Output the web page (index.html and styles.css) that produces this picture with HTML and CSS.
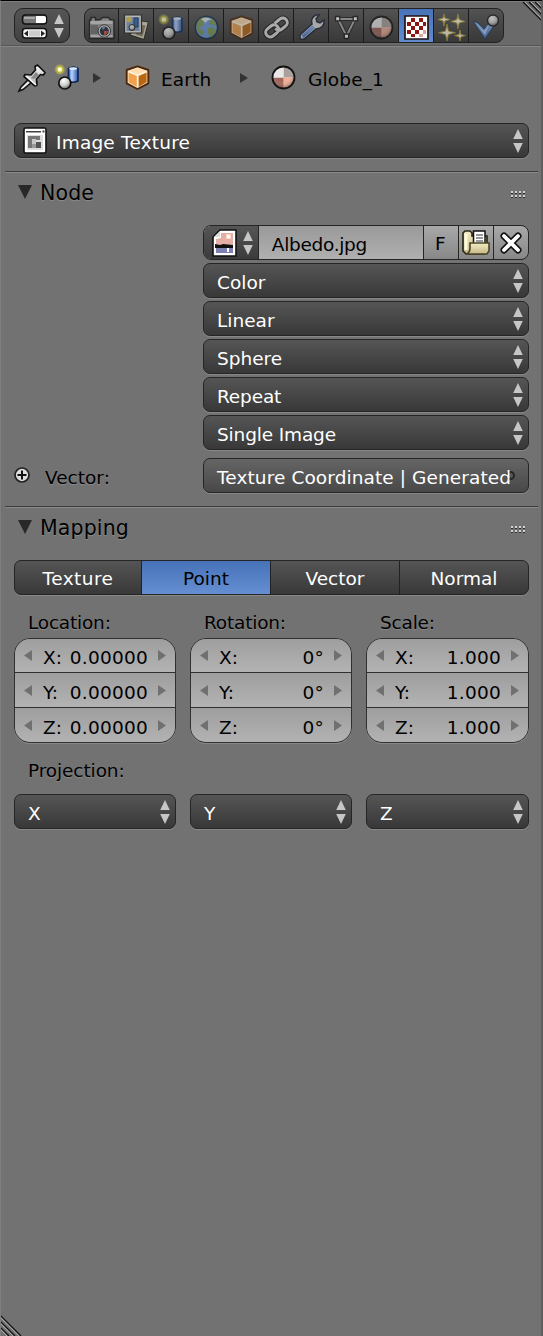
FILE: index.html
```html
<!DOCTYPE html>
<html lang="en">
<head>
<meta charset="utf-8">
<title>Texture properties</title>
<link rel="stylesheet" href="styles.css">
</head>
<body>
<svg class="defs" width="0" height="0" aria-hidden="true">
  <defs>
    <radialGradient id="ball" cx=".4" cy=".3" r=".75"><stop offset="0" stop-color="#fff"/><stop offset=".55" stop-color="#ccc"/><stop offset="1" stop-color="#555"/></radialGradient>
    <radialGradient id="glow"><stop offset="0" stop-color="#ffffb0"/><stop offset=".3" stop-color="#e2dc4a"/><stop offset=".65" stop-color="#c9c440" stop-opacity=".65"/><stop offset="1" stop-color="#c9c440" stop-opacity="0"/></radialGradient>
    <linearGradient id="tube"><stop offset="0" stop-color="#3c6cc0"/><stop offset=".35" stop-color="#b8d4ff"/><stop offset="1" stop-color="#2757a8"/></linearGradient>
    <linearGradient id="metal" x2="0" y2="1"><stop offset="0" stop-color="#fff"/><stop offset="1" stop-color="#aaa"/></linearGradient>
    <linearGradient id="blue" x2="0" y2="1"><stop offset="0" stop-color="#8fb8f0"/><stop offset="1" stop-color="#4478c4"/></linearGradient>
    <linearGradient id="sand" x2="0" y2="1"><stop offset="0" stop-color="#f4ecc4"/><stop offset="1" stop-color="#c5b884"/></linearGradient>
    <radialGradient id="sphereShade" cx=".42" cy=".35" r=".65"><stop offset=".5" stop-color="#fff" stop-opacity="0"/><stop offset="1" stop-color="#000" stop-opacity=".35"/></radialGradient>
  </defs>
  <symbol id="scene" viewBox="0 0 27 27">
    <path d="M14.500 4.500v12.500q4.500 2.500 9.500 0v-12.500q-4.500-3-9.500 0z" fill="url(#tube)" stroke="#122a55" stroke-width="1.700"/>
    <ellipse cx="19.200" cy="4.600" rx="4" ry="1.400" fill="#dbe9ff"/>
    <circle cx="5.800" cy="5.500" r="5.800" fill="url(#glow)"/><rect x="4" y="3.700" width="3.600" height="3.600" fill="#ffffd5"/>
    <circle cx="10.800" cy="19" r="6" fill="url(#ball)" stroke="#111" stroke-width="1.700"/>
  </symbol>
  <symbol id="cube" viewBox="0 0 27 27">
    <path d="M13.500 2.300 24.300 6v13.300L13.500 25 2.700 19.300V6z" fill="#fff0d8" stroke="#4a2508" stroke-width="1.900" stroke-linejoin="round"/>
    <path d="M4.500 8.500 12.800 12v11L4.500 18.200z" fill="#f1a04c"/><path d="M14.600 12l8-3.500v9.800l-8 4.700z" fill="#b96610"/><path d="M13.500 3.800 22 6.900l-8.500 3.400L5 6.900z" fill="#ffdcae"/>
  </symbol>
  <symbol id="material" viewBox="0 0 27 27">
    <circle cx="13.500" cy="13.500" r="11" fill="#f1efee"/>
    <path d="M13.500 13.500V2.500a11 11 0 0 1 11 11z" fill="#aaa09c"/><path d="M13.500 13.500h11a11 11 0 0 1-11 11z" fill="#f0ae96"/><path d="M13.500 13.500v11a11 11 0 0 1-11-11z" fill="#a2655a"/><path d="M13.500 13.500H2.500a11 11 0 0 1 11-11z" fill="#e9e8e8"/>
    <circle cx="13.500" cy="13.500" r="11" fill="url(#sphereShade)" stroke="#111" stroke-width="1.800"/>
  </symbol>
  <symbol id="updown" viewBox="0 0 10 24"><path d="M5 0 9.800 10H.200zM.200 14h9.600L5 24z" fill="#c6c6c6"/></symbol>
  <symbol id="grip" viewBox="0 0 15 7"><path d="M0 1h2m2 0h2m2 0h2m2 0h2M0 5h2m2 0h2m2 0h2m2 0h2" stroke="#d2d2d2" stroke-width="2"/><path d="M0 2.500h2m2 0h2m2 0h2m2 0h2M0 6.500h2m2 0h2m2 0h2m2 0h2" stroke="#303030"/></symbol>
</svg>

<main class="editor">
  <header class="header">
    <button class="editor-type">
      <svg class="toggles" viewBox="0 0 27 27"><rect x="1.500" y="2" width="24" height="9" rx="3" fill="#777" stroke="#111" stroke-width="1.500"/><path d="M15 3h8q2 0 2 2v3q0 2-2 2h-8z" fill="#fff"/><path d="M3 4h11v2H3z" fill="#aaa"/><rect x="1.500" y="15.500" width="24" height="9.500" rx="3" fill="#f4f4f4" stroke="#111" stroke-width="1.500"/><path d="M8 17.500h11v6H8z" fill="#ccc"/><path d="M7 17.500v6l-4-3zM20 17.500v6l4-3z" fill="#222"/></svg>
      <svg class="updown"><use href="#updown"/></svg>
    </button>
    <nav class="tabs">
      <button class="tab"><svg viewBox="0 0 27 27"><path d="M3 3.500h4.500V6l5-.500 2-2h6l1.500 2 4 .500v18.500H1.500V6H3z" fill="#a5a5a5" stroke="#191919" stroke-width="1.400"/><path d="M2.500 7h22v3h-22zM2.500 21h22v2h-22z" fill="#d8d8d8"/><path d="M3 11h7v9H3z" fill="#777"/><circle cx="16.300" cy="17" r="6.300" fill="#ddd" stroke="#333"/><circle cx="16.300" cy="17" r="4.500" fill="#222b40"/><path d="M16 17h4q-1 4-4 4z" fill="#d4553f"/><path d="M13.500 14q2-2 4-1l-2 3z" fill="#7b8fb8"/></svg></button>
      <button class="tab"><svg viewBox="0 0 27 27"><path d="m12 6 13.500 2-4.500 17.500L7 21z" fill="#ddd8c4" stroke="#2a2a20" stroke-width="1.200"/><path d="m19 11 3.500.500-3 11-7-2z" fill="#8a8262"/><path d="M1.500 1h17v18h-17z" fill="#f0f0f0" stroke="#222" stroke-width="1.200"/><path d="M3.500 3h13v14h-13z" fill="#85a4cb"/><circle cx="6" cy="5.500" r="2.800" fill="#e3c958"/><path d="M11 4h4v9h-4z" fill="#316abd" stroke="#183968"/><circle cx="9" cy="13.500" r="3" fill="url(#ball)" stroke="#222"/></svg></button>
      <button class="tab"><svg><use href="#scene"/></svg></button>
      <button class="tab"><svg viewBox="0 0 27 27"><circle cx="13.500" cy="13.500" r="11.200" fill="#6b9bdd" stroke="#162b4c" stroke-width="1.500"/><path d="M3.500 10Q6 3.500 12 3l1 3-3 1 1 3-3 3-2 1 3 2 2 2-2 4Q3 18 3.500 10zM15 4q7 1 8.500 7l-2 1-2-2-3 1-1-3 2-1zM15 14l4-1 4 3q-1 5-6 7.500L15 19z" fill="#7c9a52"/><path d="M8 5q6-3 11 1-5-1-6 3z" fill="#fff" opacity=".75"/></svg></button>
      <button class="tab"><svg><use href="#cube"/></svg></button>
      <button class="tab"><svg viewBox="0 0 27 27"><g fill="none" transform="rotate(-38 13.500 13.500)"><g stroke="#1b1b1b" stroke-width="5.300"><rect x="1" y="9" width="14" height="9" rx="4.500"/><rect x="12" y="9" width="14" height="9" rx="4.500"/></g><g stroke="#e0e0e0" stroke-width="3"><rect x="1" y="9" width="14" height="9" rx="4.500"/><path d="M14.500 9H21.500a4.500 4.500 0 0 1 0 9H16.500a4.500 4.500 0 0 1-4.500-4.500"/></g></g></svg></button>
      <button class="tab"><svg viewBox="0 0 27 27"><path d="M2 21 14 10q-2-6 4-9h3l-3 4 1 3 3 1 4-3q1 8-8 9L6 25q-3 1-4-1z" fill="#ddd" stroke="#182136" stroke-width="1.500"/><path d="m3.500 21.500 11-10.500 2.500 3L5.500 24z" fill="url(#blue)"/></svg></button>
      <button class="tab"><svg viewBox="0 0 27 27"><path d="M5 5h17l-8.500 17z" fill="none" stroke="#191919" stroke-width="3.800"/><path d="M5 5h17l-8.500 17z" fill="none" stroke="#aaa" stroke-width="2"/><g fill="#fff" stroke="#161616" stroke-width="1.300"><path d="M2.500 2.500h4.300v4.300H2.500zM20.200 2.500h4.300v4.300h-4.300zM11.300 20h4.300v4.300h-4.300z"/></g></svg></button>
      <button class="tab"><svg><use href="#material"/></svg></button>
      <button class="tab active"><svg viewBox="0 0 27 27"><path d="M2 2h23v23H2z" fill="#fff" stroke="#211" stroke-width="1.700"/><g fill="#8d1612"><path d="M8 4h4v4H8zM16 4h4v4h-4zM4 8h4v4H4zM12 8h4v4h-4zM20 8h3v4h-3zM8 12h4v4H8zM16 12h4v4h-4zM4 16h4v4H4zM12 16h4v4h-4zM8 20h4v3H8z"/></g><path d="M20 16h3v4h-3zM16 20h4v3h-4z" fill="#dda49b"/></svg></button>
      <button class="tab"><svg viewBox="0 0 27 27"><g fill="#fff8d8" stroke="#a59331" stroke-width="1"><path d="m6 0 1 4 5 1.500-5 1.500-1 5-1-5-5-1.500L5 4z"/><path d="m20 0 1.200 5.500 6 2-6 1.500L20 15l-1.200-6-6-1.500 6-2zM9 10l1.500 7 7 1.700-7 1.800L9 27l-1.500-6.500-7-1.800 7-1.700zM22 16l1 4.500 4.500 1-4.500 1.500-1 4-1-4-4.500-1.500 4.500-1z"/></g></svg></button>
      <button class="tab"><svg viewBox="0 0 27 27"><path d="m0 7 5 2 6 6 6-8 5 3-10 15z" fill="url(#blue)" stroke="#203964"/><path d="m3 9 8 8 5-6-4 10z" fill="#b9d2f8"/><circle cx="20" cy="6.500" r="5.500" fill="url(#ball)" stroke="#181818" stroke-width="1.400"/></svg></button>
    </nav>
  </header>

  <nav class="path">
    <svg class="pin" viewBox="0 0 28 28"><path d="m11 15 3 3-9 7.500-4 1.500 2-4z" fill="#eee" stroke="#111" stroke-width="1.600"/><path d="M17 2.500 19.500 1 27 8.500 25.500 11l-3-.500-4 4.500.500 6-2 1L6 12.500l1-2 6 .500 4.500-5z" fill="url(#metal)" stroke="#111" stroke-width="1.700" stroke-linejoin="round"/><path d="m18 8 3 3-5 4-3-1z" fill="#888"/><path d="m8 12 10 9" stroke="#fff" stroke-width="1.500"/></svg>
    <svg class="path-scene"><use href="#scene"/></svg>
    <svg class="arrow" viewBox="0 0 8 10"><path d="m0 0 8 5-8 5z"/></svg>
    <svg class="path-cube"><use href="#cube"/></svg>
    <span class="path-object">Earth</span>
    <svg class="arrow" viewBox="0 0 8 10"><path d="m0 0 8 5-8 5z"/></svg>
    <svg class="path-material"><use href="#material"/></svg>
    <span>Globe_1</span>
  </nav>

  <button class="select type">
    <svg class="texture-icon" viewBox="0 0 24 27"><rect x="1" y="1" width="22" height="25" rx="1.500" fill="#fff" stroke="#111" stroke-width="1.600"/><path d="M3 4h15v1.500H3zM19.500 3.500h2v2h-2z" fill="#444"/><path d="M4 8h16v15H4z" fill="#ddd"/><path d="M5 9h12v4H5zM5 13h4v8H5z" fill="#777"/><path d="M9 12h4v5H9z" fill="#c8c8c8"/><path d="M13 15h5v6h-5z" fill="#555"/><path d="M9 17h4v4H9z" fill="#999"/></svg>
    <span>Image Texture</span><svg class="updown"><use href="#updown"/></svg>
  </button>

  <section class="panel node">
    <h2><svg class="tri" viewBox="0 0 14 14"><path d="M0 0h14L7 14z"/></svg><span>Node</span><svg class="grip"><use href="#grip"/></svg></h2>
    <div class="stack">
      <div class="datablock">
        <button class="browse"><svg class="image-icon" viewBox="0 0 25 28"><path d="M8 1h16v26H1V8z" fill="#fff" stroke="#111" stroke-width="1.600"/><path d="M9 4h12v12H4V10l5-1z" fill="#e5afa6"/><path d="M4 18h17v6H4z" fill="#7c80b2"/><path d="m3 15 5 1 3-1 10 1v3H3z" fill="#111"/><path d="M14 5h5v5h-5z" fill="#ffd3c4"/><path d="M15 6h3v3h-3zM15 19h2v4h-2z" fill="#fff"/><path d="m2 8 6-6v6z" fill="#ddd"/></svg><svg class="updown"><use href="#updown"/></svg></button>
        <span class="name">Albedo.jpg</span>
        <button class="small fake-user">F</button>
        <button class="small"><svg class="folder" viewBox="0 0 28 25"><path d="M1 3 3 1h5l2 2v3h15v16l-3 2H4l-3-3z" fill="url(#sand)" stroke="#2b2714" stroke-width="1.700"/><path d="M11.500 1h11.500v14h-11.500z" fill="#fff" stroke="#111" stroke-width="1.500"/><path d="M14 5h7M14 8h7M14 11h7" stroke="#777" stroke-width="1.300"/><path d="M4 24q4-1 4-6v-5h19v8l-2 3z" fill="url(#sand)" stroke="#4c4529" stroke-width="1.600"/><path d="M4 4v16" stroke="#fffbe0" stroke-width="3"/></svg></button>
        <button class="small"><svg class="cross" viewBox="0 0 22 22"><path d="m4 4 14 14M18 4 4 18" stroke="#111" stroke-width="7" stroke-linecap="round"/><path d="m4 4 14 14M18 4 4 18" stroke="#fff" stroke-width="3.800" stroke-linecap="round"/></svg></button>
      </div>
      <button class="select"><span>Color</span><svg class="updown"><use href="#updown"/></svg></button>
      <button class="select"><span>Linear</span><svg class="updown"><use href="#updown"/></svg></button>
      <button class="select"><span>Sphere</span><svg class="updown"><use href="#updown"/></svg></button>
      <button class="select tight"><span>Repeat</span><svg class="updown"><use href="#updown"/></svg></button>
      <button class="select tight"><span>Single Image</span><svg class="updown"><use href="#updown"/></svg></button>
    </div>
    <div class="vector-row">
      <svg class="plus" viewBox="0 0 16 16"><circle cx="8" cy="8" r="7" fill="#ddd" stroke="#222" stroke-width="1.700"/><path d="M8 3.500v9M3.500 8h9" stroke="#111" stroke-width="2"/></svg>
      <span class="label">Vector:</span>
      <button class="select link"><span>Texture Coordinate | Generated</span><i class="socket"></i></button>
    </div>
  </section>

  <section class="panel mapping">
    <h2><svg class="tri" viewBox="0 0 14 14"><path d="M0 0h14L7 14z"/></svg><span>Mapping</span><svg class="grip"><use href="#grip"/></svg></h2>
    <div class="segments"><button class="wide">Texture</button><button class="active">Point</button><button>Vector</button><button>Normal</button></div>
    <div class="columns labels"><span>Location:</span><span>Rotation:</span><span>Scale:</span></div>
    <div class="columns values">
      <div class="numbers">
        <div class="number"><svg viewBox="0 0 8 11"><path d="M8 0v11L0 5.500z"/></svg><span>X:</span><b>0.00000</b><svg viewBox="0 0 8 11"><path d="m0 0 8 5.500L0 11z"/></svg></div>
        <div class="number"><svg viewBox="0 0 8 11"><path d="M8 0v11L0 5.500z"/></svg><span>Y:</span><b>0.00000</b><svg viewBox="0 0 8 11"><path d="m0 0 8 5.500L0 11z"/></svg></div>
        <div class="number"><svg viewBox="0 0 8 11"><path d="M8 0v11L0 5.500z"/></svg><span>Z:</span><b>0.00000</b><svg viewBox="0 0 8 11"><path d="m0 0 8 5.500L0 11z"/></svg></div>
      </div>
      <div class="numbers">
        <div class="number"><svg viewBox="0 0 8 11"><path d="M8 0v11L0 5.500z"/></svg><span>X:</span><b>0°</b><svg viewBox="0 0 8 11"><path d="m0 0 8 5.500L0 11z"/></svg></div>
        <div class="number"><svg viewBox="0 0 8 11"><path d="M8 0v11L0 5.500z"/></svg><span>Y:</span><b>0°</b><svg viewBox="0 0 8 11"><path d="m0 0 8 5.500L0 11z"/></svg></div>
        <div class="number"><svg viewBox="0 0 8 11"><path d="M8 0v11L0 5.500z"/></svg><span>Z:</span><b>0°</b><svg viewBox="0 0 8 11"><path d="m0 0 8 5.500L0 11z"/></svg></div>
      </div>
      <div class="numbers">
        <div class="number"><svg viewBox="0 0 8 11"><path d="M8 0v11L0 5.500z"/></svg><span>X:</span><b>1.000</b><svg viewBox="0 0 8 11"><path d="m0 0 8 5.500L0 11z"/></svg></div>
        <div class="number"><svg viewBox="0 0 8 11"><path d="M8 0v11L0 5.500z"/></svg><span>Y:</span><b>1.000</b><svg viewBox="0 0 8 11"><path d="m0 0 8 5.500L0 11z"/></svg></div>
        <div class="number"><svg viewBox="0 0 8 11"><path d="M8 0v11L0 5.500z"/></svg><span>Z:</span><b>1.000</b><svg viewBox="0 0 8 11"><path d="m0 0 8 5.500L0 11z"/></svg></div>
      </div>
    </div>
    <div class="projection-label">Projection:</div>
    <div class="columns">
      <button class="select"><span>X</span><svg class="updown"><use href="#updown"/></svg></button>
      <button class="select"><span>Y</span><svg class="updown"><use href="#updown"/></svg></button>
      <button class="select"><span>Z</span><svg class="updown"><use href="#updown"/></svg></button>
    </div>
  </section>
  <svg class="corner top" viewBox="0 0 21 21"><path d="m1 1 20 20M7 1l14 14M13 1l8 8" stroke="#111" stroke-width="1.200"/><path d="m3 1 18 18M9 1l12 12M15 1l6 6" stroke="#aaa" stroke-width="1"/></svg>
  <svg class="corner bottom" viewBox="0 0 21 21"><path d="m0 0 21 21M0 6l15 15M0 12l9 9" stroke="#111" stroke-width="1.200"/><path d="m0 2 19 19M0 8l13 13M0 14l7 7" stroke="#aaa" stroke-width="1"/></svg>
</main>
</body>
</html>
```
FILE: styles.css
```css
* { box-sizing: border-box; }
body { margin: 0; background: #727272; color: #000; font: 18.5px/35px "DejaVu Sans", sans-serif; }
button { margin: 0; padding: 0; border: 0; background: none; color: inherit; font: inherit; text-align: left; }
svg { display: block; flex: none; overflow: visible; }
.defs { position: absolute; }
.editor { position: relative; height: 1336px; overflow: hidden; border-top: 1px solid #000; border-left: 1px solid #7f7f7f; border-right: 2px solid #5e5e5e; }
.header { display: flex; height: 46px; padding: 6px 0 0 13px; gap: 14px; background: #6a6a6a; border-top: 1px solid #7c7c7c; border-bottom: 1px solid #888; box-shadow: inset 0 -1px #555; }
.editor-type { display: flex; width: 56px; height: 35px; padding: 4px 6px; border: 1px solid #222; border-radius: 9px; background: linear-gradient(#555, #414141); }
.editor-type .toggles { width: 27px; height: 27px; }
.updown { width: 10px; height: 24px; }
.editor-type .updown { margin: 1px 0 0 6px; }
.tabs { display: flex; width: 420px; height: 35px; border: 1px solid #222; border-radius: 8px; overflow: hidden; background: linear-gradient(#535353, #393939); }
.tab { width: 35px; height: 33px; padding: 3px 0 0 4px; border-right: 1px solid #1c1c1c; flex: none; }
.tab:first-child { width: 34px; padding-left: 3px; }
.tab:last-child { border: 0; }
.tab svg { width: 27px; height: 27px; opacity: .65; }
.tab.active { background: linear-gradient(#4772b8, #628ccf); }
.tab.active svg { opacity: 1; }
.path { display: flex; align-items: center; height: 76px; padding: 0 0 15px 17px; }
.path span { padding-top: 3px; letter-spacing: .15px; }
.pin { width: 28px; height: 28px; }
.path-scene { width: 27px; height: 27px; margin-left: 8px; }
.arrow { width: 8px; height: 10px; fill: #333; margin-left: 12px; }
.path-cube { width: 27px; height: 27px; margin: 0 10px 0 23px; }
.path-object { width: 67px; }
.path-object + .arrow { margin-left: 12px; }
.path-material { width: 27px; height: 27px; margin: 0 11px 0 22px; }
.select { display: flex; align-items: center; width: 100%; height: 35px; padding: 0 5px 0 13px; border: 1px solid #252525; border-radius: 7px; background: linear-gradient(#555, #383838); box-shadow: 0 1px #888; color: #fff; white-space: nowrap; }
.select > span { padding-top: 3px; }
.select .updown { margin-left: auto; }
.tight { letter-spacing: -.15px; }
.type { width: 515px; margin-left: 13px; padding-left: 8px; letter-spacing: .2px; }
.texture-icon { width: 24px; height: 27px; margin: 0 9px 0 0; }
.panel { margin: 13px 3px 0 4px; padding: 0 9px; border-top: 1px solid #3b3b3b; box-shadow: inset 0 1px #8b8b8b; }
h2 { display: flex; align-items: center; height: 41px; margin: 0; padding: 0 4px; font-size: 20.5px; font-weight: 400; letter-spacing: .15px; text-shadow: 0 1px 1px #8e8e8e; }
h2 span { padding-top: 2px; margin-left: 8px; }
.tri { width: 14px; height: 14px; margin-top: -2px; fill: #282828; }
.grip { width: 15px; height: 7px; margin: 4px -1px 0 auto; }
.stack { display: grid; gap: 3px; margin: 12px 0 0 189px; }
.datablock { display: flex; height: 35px; border: 1px solid #252525; border-radius: 8px; overflow: hidden; background: linear-gradient(#a8a8a8, #888); }
.browse { display: flex; width: 55px; padding: 3px 0 0 8px; border-right: 1px solid #252525; background: linear-gradient(#555, #3b3b3b); }
.image-icon { width: 25px; height: 28px; }
.browse .updown { margin: 2px 0 0 6px; }
.name { width: 165px; height: 33px; padding: 1px 0 0 13px; background: linear-gradient(#999, #b0b0b0); letter-spacing: -.3px; }
.small { display: flex; align-items: center; justify-content: center; width: 35px; border-left: 1px solid #252525; }
.fake-user { padding: 2px 2px 0 0; }
.folder { width: 28px; height: 25px; }
.cross { width: 22px; height: 22px; }
.vector-row { display: flex; align-items: center; height: 35px; margin-top: 8px; }
.plus { width: 16px; height: 16px; margin: -2px 15px 0 0; }
.label { width: 158px; padding-top: 3px; text-shadow: 0 1px 1px #8b8b8b; }
.link { position: relative; width: 326px; background: linear-gradient(#656565, #484848); letter-spacing: .1px; }
.link > span { position: relative; z-index: 1; }
.socket { position: absolute; right: 13px; top: 12px; width: 9px; height: 9px; border: 2px solid #262626; border-radius: 50%; }
.segments { display: grid; grid-template-columns: 127px 129px 129px 128px; height: 35px; margin-top: 12px; border: 1px solid #252525; border-radius: 7px; overflow: hidden; box-shadow: 0 1px #888; background: linear-gradient(#555, #383838); color: #fff; }
.segments button { height: 33px; border-right: 1px solid #222; text-align: center; line-height: 36px; }
.segments button:last-child { border: 0; }
.segments .wide { letter-spacing: .45px; }
.segments .active { color: #000; background: linear-gradient(#4772b8, #658fd2); }
.columns { display: grid; grid-template-columns: 162px 162px 163px; column-gap: 14px; }
.labels { height: 43px; padding: 10px 0 0 14px; letter-spacing: -.2px; text-shadow: 0 1px 1px #8b8b8b; }
.numbers { height: 105px; border: 1px solid #303030; border-radius: 16px; overflow: hidden; box-shadow: 0 1px #888; }
.number { display: flex; align-items: center; height: 35px; padding: 4px 9px 0; border-bottom: 1px solid #303030; background: linear-gradient(#9e9e9e, #b3b3b3); }
.number:first-child { height: 34px; }
.number:last-child { border: 0; }
.number svg { width: 8px; height: 11px; margin-top: -4px; fill: #707070; }
.number span { margin-left: 11px; }
.number b { margin: 0 10px 0 auto; font-weight: 400; letter-spacing: .25px; }
.projection-label { height: 51px; padding: 10px 0 0 14px; letter-spacing: -.1px; text-shadow: 0 1px 1px #8b8b8b; }
.corner { position: absolute; width: 21px; height: 21px; }
.top { top: 0; right: -2px; }
.bottom { left: -1px; bottom: 0; }
```
